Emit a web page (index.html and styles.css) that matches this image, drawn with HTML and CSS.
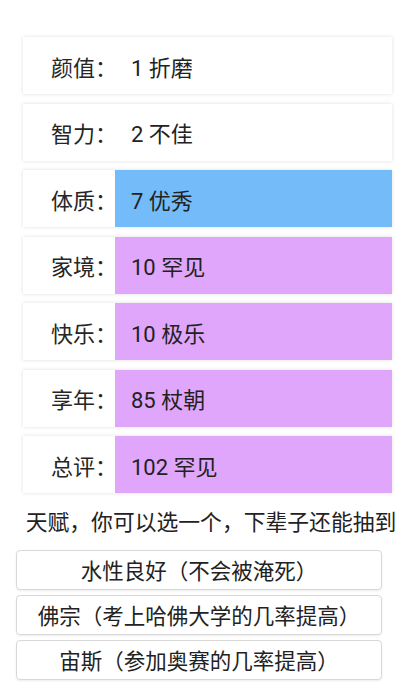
FILE: index.html
```html
<!DOCTYPE html>
<html lang="zh-CN">
<head>
<meta charset="utf-8">
<link rel="stylesheet" href="styles.css">
</head>
<body>
<div class="page">
  <div class="rows">
    <div class="row"><div class="label">颜值：</div><div class="value">1 折磨</div></div>
    <div class="row"><div class="label">智力：</div><div class="value">2 不佳</div></div>
    <div class="row"><div class="label">体质：</div><div class="value blue">7 优秀</div></div>
    <div class="row"><div class="label">家境：</div><div class="value purple">10 罕见</div></div>
    <div class="row"><div class="label">快乐：</div><div class="value purple">10 极乐</div></div>
    <div class="row"><div class="label">享年：</div><div class="value purple">85 杖朝</div></div>
    <div class="row"><div class="label">总评：</div><div class="value purple">102 罕见</div></div>
  </div>
  <div class="tip">天赋，你可以选一个，下辈子还能抽到</div>
  <div class="choices">
    <div class="choice">水性良好（不会被淹死）</div>
    <div class="choice">佛宗（考上哈佛大学的几率提高）</div>
    <div class="choice">宙斯（参加奥赛的几率提高）</div>
  </div>
</div>
</body>
</html>
```
FILE: styles.css
```css
html, body {
  margin: 0;
  padding: 0;
  background: #ffffff;
}
body {
  font-family: Roboto, "Noto Sans CJK SC", sans-serif;
  color: #222222;
  width: 420px;
  height: 700px;
  overflow: hidden;
  text-spacing-trim: space-all;
}
.page {
  padding-top: 37px;
}
.rows {
  display: flex;
  flex-direction: column;
  gap: 9.5px;
  margin: 0 28px 0 23px;
}
.row {
  display: flex;
  height: 57px;
  background: #ffffff;
  box-shadow: 0 0 4px rgba(0, 0, 0, 0.13);
  font-size: 22px;
}
.label {
  width: 92px;
  flex: none;
  display: flex;
  align-items: center;
  padding-left: 28px;
  box-sizing: border-box;
  white-space: nowrap;
  color: #262626;
}
.value {
  flex: 1;
  display: flex;
  align-items: center;
  padding-left: 16px;
  color: #222222;
}
.blue {
  background: #73bcf9;
}
.purple {
  background: #e0a6fb;
}
.tip {
  margin-top: 15px;
  text-align: center;
  font-size: 21.8px;
  line-height: 30px;
  color: #222222;
  padding-left: 2px;
  white-space: nowrap;
}
.choices {
  margin: 12px 38px 0 16px;
  display: flex;
  flex-direction: column;
  gap: 5px;
}
.choice {
  height: 40px;
  box-sizing: border-box;
  border: 1px solid #d8d8d8;
  border-radius: 4px;
  box-shadow: 0 1px 2px rgba(0, 0, 0, 0.08);
  display: flex;
  align-items: center;
  justify-content: center;
  font-size: 21.5px;
  color: #222222;
  padding-bottom: 2px;
  white-space: nowrap;
}
```
